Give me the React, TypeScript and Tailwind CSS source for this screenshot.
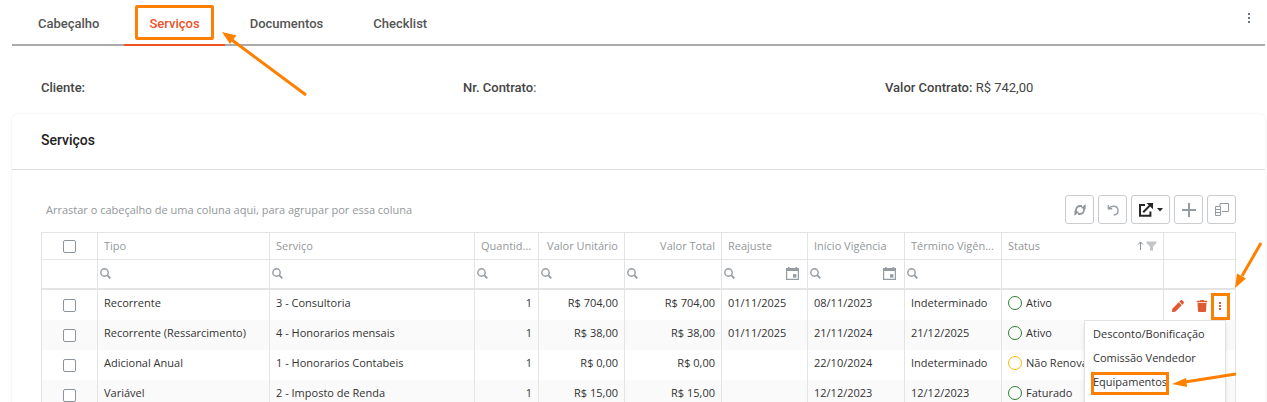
import { useState } from 'react';
import clsx from 'clsx';
import { FaPen, FaTrash } from 'react-icons/fa';

type Status = 'green' | 'yellow';

interface ServiceRow {
  tipo: string;
  servico: string;
  quantidade: number;
  unitario: string;
  total: string;
  reajuste: string;
  inicio: string;
  termino: string;
  status: string;
  color: Status;
}

const TABS = ['Cabeçalho', 'Serviços', 'Documentos', 'Checklist'];

const COLUMNS = [
  { label: 'Tipo', width: 'w-[172px]', search: true },
  { label: 'Serviço', width: '', search: true },
  { label: 'Quantidade', short: 'Quantid...', width: 'w-16', search: true },
  { label: 'Valor Unitário', width: 'w-[86px]', search: true, right: true },
  { label: 'Valor Total', width: 'w-[97px]', search: true, right: true },
  { label: 'Reajuste', width: 'w-[86px]', search: true, date: true },
  { label: 'Início Vigência', width: 'w-[97px]', search: true, date: true },
  { label: 'Término Vigência', short: 'Término Vigên...', width: 'w-[97px]', search: true },
  { label: 'Status', width: 'w-[162px]', sorted: true },
];

const ROWS: ServiceRow[] = [
  { tipo: 'Recorrente', servico: '3 - Consultoria', quantidade: 1, unitario: 'R$ 704,00', total: 'R$ 704,00', reajuste: '01/11/2025', inicio: '08/11/2023', termino: 'Indeterminado', status: 'Ativo', color: 'green' },
  { tipo: 'Recorrente (Ressarcimento)', servico: '4 - Honorarios mensais', quantidade: 1, unitario: 'R$ 38,00', total: 'R$ 38,00', reajuste: '01/11/2025', inicio: '21/11/2024', termino: '21/12/2025', status: 'Ativo', color: 'green' },
  { tipo: 'Adicional Anual', servico: '1 - Honorarios Contabeis', quantidade: 1, unitario: 'R$ 0,00', total: 'R$ 0,00', reajuste: '', inicio: '22/10/2024', termino: 'Indeterminado', status: 'Não Renovado', color: 'yellow' },
  { tipo: 'Variável', servico: '2 - Imposto de Renda', quantidade: 1, unitario: 'R$ 15,00', total: 'R$ 15,00', reajuste: '', inicio: '12/12/2023', termino: '12/12/2023', status: 'Faturado', color: 'green' },
];

const MENU = ['Desconto/Bonificação', 'Comissão Vendedor', 'Equipamentos'];

const CELL = 'border-l border-[#e4e4e4] px-[6px] pt-[5px] align-top whitespace-nowrap';

function SearchIcon() {
  return (
    <svg width="11" height="11" viewBox="0 0 11 11" fill="none" stroke="#959ba3" aria-hidden="true">
      <circle cx="4.5" cy="4.5" r="3.7" strokeWidth="1.4" />
      <path d="M7.2 7.2 10.3 10.3" strokeWidth="1.8" />
    </svg>
  );
}

function CalendarIcon() {
  return (
    <svg width="13" height="13" viewBox="0 0 13 13" fill="#959ba3" aria-hidden="true">
      <path d="M0 1h2V0h1.5v1h6V0H11v1h2v12H0zM1.2 4v7.8h10.6V4z" fillRule="evenodd" />
      <path d="M7 7.2h3.4v3.4H7z" />
    </svg>
  );
}

function RefreshIcon() {
  return (
    <svg width="12" height="12" viewBox="0 0 12 12" fill="none" stroke="#8e959c" strokeWidth="1.8" aria-hidden="true">
      <path d="M2 8V6.2C2 3.8 3.8 2 6.2 2H8M10 4v1.800C10 8.2 8.2 10 5.800 10H4" />
      <path d="M11.6.2v5L6.800 4zM.4 11.800v-5L5.200 8z" fill="#8e959c" stroke="none" />
    </svg>
  );
}

function UndoIcon() {
  return (
    <svg width="12" height="12" viewBox="0 0 12 12" fill="none" stroke="#959ba3" strokeWidth="1.4" aria-hidden="true">
      <path d="M1.4 1v3.8h3.8M1.6 4.6C3 2.8 5.2 1.9 7.4 2.3c2 .4 3.6 2 3.6 4.2 0 2.4-1.9 4.3-4.3 4.5" />
    </svg>
  );
}

function ExportIcon() {
  return (
    <svg width="15" height="14" viewBox="0 0 15 14" fill="none" stroke="#262626" strokeWidth="2" aria-hidden="true">
      <path d="M7 2H2v10.8h10.4V8.4" />
      <path d="M5.2 9.2 12 2.4" />
      <path d="M8.6 0H15v6.2z" fill="#262626" stroke="none" />
    </svg>
  );
}

function ColumnsIcon() {
  return (
    <svg width="14" height="13" viewBox="0 0 14 13" fill="none" stroke="#959ba3" aria-hidden="true">
      <path d="M5 3.5V.5h8.5v8H7M.5 3.5h5v9h-5zM.5 6.5h5M.5 9.5h5" />
    </svg>
  );
}

function DotsIcon({ gap }: { gap: number }) {
  const height = gap * 2 + 2;
  return (
    <svg width="2" height={height} viewBox={`0 0 2 ${height}`} fill="currentColor" aria-hidden="true">
      {[0, 1, 2].map((n) => (
        <rect key={n} y={n * gap} width="2" height="2" />
      ))}
    </svg>
  );
}

function ToolButton({ label, wide, children }: { label: string; wide?: boolean; children: React.ReactNode }) {
  return (
    <button
      type="button"
      aria-label={label}
      className={clsx(
        'flex h-[29px] items-center justify-center gap-1 rounded-[3px] border border-[#c9cccf] bg-white',
        wide ? 'w-[39px]' : 'w-[29px]',
      )}
    >
      {children}
    </button>
  );
}

function Checkbox({ label }: { label: string }) {
  return (
    <input
      type="checkbox"
      aria-label={label}
      className="block size-[13px] appearance-none rounded-[2px] border border-[#8c949c] bg-white checked:bg-[#e8532b]"
    />
  );
}

function RowMenu() {
  return (
    <ul role="menu" className="absolute top-[30px] right-[9px] z-10 h-[110px] w-[142px] border border-[#e2e2e2] bg-white pt-px shadow-md">
      {MENU.map((item) => (
        <li key={item} role="none" className="relative h-6">
          <button type="button" role="menuitem" className="block h-full w-full px-2 text-left">
            {item}
          </button>
          {item === 'Equipamentos' && (
            <>
              <span className="pointer-events-none absolute top-[2px] left-[6px] h-[23px] w-[78px] border-3 border-[#ff8000]" />
              <svg className="pointer-events-none absolute top-[2px] left-[86px]" width="68" height="20" viewBox="0 0 68 20" fill="#ff8000" stroke="#ff8000">
                <path d="M14 10 65 2" strokeWidth="3" />
                <path d="M1 12 15 6l1 9z" stroke="none" />
              </svg>
            </>
          )}
        </li>
      ))}
    </ul>
  );
}

function ServicesTable() {
  return (
    <table className="w-full table-fixed border-separate border-spacing-0 border-t border-r border-[#e4e4e4]">
      <colgroup>
        <col className="w-14" />
        {COLUMNS.map((c) => (
          <col key={c.label} className={c.width} />
        ))}
        <col className="w-[72px]" />
      </colgroup>
      <thead className="text-[#93979b]">
        <tr className="h-[27px]">
          <th className="border-b border-l border-[#e4e4e4] p-0">
            <div className="flex justify-center">
              <Checkbox label="Selecionar todos" />
            </div>
          </th>
          {COLUMNS.map((c) => (
            <th
              key={c.label}
              title={c.label}
              className={clsx(
                'border-b border-l border-[#e4e4e4] px-[6px] py-0 font-normal whitespace-nowrap',
                c.right ? 'text-right' : 'text-left',
              )}
            >
              {c.sorted ? (
                <span className="flex items-center">
                  {c.label}
                  <svg className="ml-auto" width="20" height="10" viewBox="0 0 20 10" aria-hidden="true">
                    <path d="M3.5 9V1M1 3.5 3.5 1 6 3.5" fill="none" stroke="#8b9096" />
                    <path d="M9.5 0.5H19.5V2L16 5.5V9.5H13V5.5L9.5 2z" fill="#c3c6c9" />
                  </svg>
                </span>
              ) : (
                c.short ?? c.label
              )}
            </th>
          ))}
          <th aria-label="Ações" className="border-b border-l border-[#e4e4e4] p-0" />
        </tr>
        <tr className="h-[30px]">
          <td className="border-b-2 border-l border-[#e4e4e4] p-0" />
          {COLUMNS.map((c) => (
            <td key={c.label} className="border-b-2 border-l border-[#e4e4e4] p-0">
              {c.search && (
                <div className="flex items-center pr-2 pb-[2px] pl-[2px]">
                  <SearchIcon />
                  <input type="text" aria-label={`Filtrar ${c.label}`} className="h-6 w-0 min-w-0 flex-1 bg-transparent px-1 outline-none" />
                  {c.date && (
                    <button type="button" aria-label={`Escolher data de ${c.label}`}>
                      <CalendarIcon />
                    </button>
                  )}
                </div>
              )}
            </td>
          ))}
          <td className="border-b-2 border-l border-[#e4e4e4] p-0" />
        </tr>
      </thead>
      <tbody>
        {ROWS.map((row, i) => (
          <tr key={row.servico} className="h-[30px] even:bg-[#fafafa]">
            <td className="border-l border-[#e4e4e4] p-0">
              <div className="flex justify-center">
                <Checkbox label={`Selecionar ${row.servico}`} />
              </div>
            </td>
            <td className={CELL}>{row.tipo}</td>
            <td className={CELL}>{row.servico}</td>
            <td className={clsx(CELL, 'text-right')}>{row.quantidade}</td>
            <td className={clsx(CELL, 'text-right')}>{row.unitario}</td>
            <td className={clsx(CELL, 'text-right')}>{row.total}</td>
            <td className={CELL}>{row.reajuste}</td>
            <td className={CELL}>{row.inicio}</td>
            <td className={CELL}>{row.termino}</td>
            <td className={CELL}>
              <span className="flex items-center gap-1">
                <span className={clsx('size-[14px] rounded-full border', row.color === 'green' ? 'border-[#2e7d32]' : 'border-[#fbbc04]')} />
                {row.status}
              </span>
            </td>
            <td className="relative border-l border-[#e4e4e4] p-0">
              {i === 0 && (
                <>
                  <div className="flex h-[30px] items-center pt-[2px] pl-2 text-[#df5a32]">
                    <button type="button" aria-label="Editar" className="w-6">
                      <FaPen size={12} />
                    </button>
                    <button type="button" aria-label="Excluir" className="w-4">
                      <FaTrash size={12} />
                    </button>
                    <button type="button" aria-label="Mais opções" aria-haspopup="menu" className="flex h-5 w-[15px] items-center justify-center">
                      <DotsIcon gap={3} />
                    </button>
                  </div>
                  <span className="pointer-events-none absolute top-[3px] right-[5px] z-20 h-[27px] w-[19px] border-3 border-[#ff8000]" />
                  <svg className="pointer-events-none absolute -top-[51px] -right-[31px]" width="32" height="52" viewBox="0 0 32 52" fill="#ff8000" stroke="#ff8000">
                    <path d="M8 37 27 4" strokeWidth="3" />
                    <path d="M1 49 3 34.500 12 39.500z" stroke="none" />
                  </svg>
                  <RowMenu />
                </>
              )}
            </td>
          </tr>
        ))}
      </tbody>
    </table>
  );
}

export default function App() {
  const [active, setActive] = useState('Serviços');

  return (
    <div className="h-screen overflow-hidden bg-white pr-[2px] pl-3 font-['Roboto',sans-serif] text-[13px] text-[#444]">
      <nav className="flex h-[46px] items-stretch border-b-2 border-[#aaaaaa] pl-px">
        {TABS.map((tab) => (
          <button
            key={tab}
            type="button"
            onClick={() => setActive(tab)}
            className={clsx(
              'relative -mb-[2px] border-b-2 px-[25px] pt-1 font-medium',
              tab === active ? 'border-[#f0531f] text-[#e8532b]' : 'border-transparent text-[#555]',
            )}
          >
            {tab}
            {tab === 'Serviços' && (
              <>
                <span className="pointer-events-none absolute top-[5px] right-[11px] left-[11px] h-[35px] rounded-[2px] border-3 border-[#ff8000]" />
                <svg className="pointer-events-none absolute top-[30px] left-[97px] z-10" width="88" height="68" viewBox="0 0 88 68" fill="#ff8000" stroke="#ff8000">
                  <path d="M11 10 85 65" strokeWidth="3" />
                  <path d="M1 2 15.500 5.500 9 14z" stroke="none" />
                </svg>
              </>
            )}
          </button>
        ))}
        <button type="button" aria-label="Mais opções" className="mr-2 mb-2 ml-auto flex w-4 items-center justify-center text-[#6a7290]">
          <DotsIcon gap={4} />
        </button>
      </nav>

      <div className="grid h-[68px] grid-cols-3 gap-[42px] pt-8 pl-[29px]">
        <p><b className="font-medium">Cliente:</b></p>
        <p><b className="font-medium">Nr. Contrato</b>:</p>
        <p><b className="font-medium">Valor Contrato:</b> R$ 742,00</p>
      </div>

      <section className="rounded-md shadow-[0_0_3px_rgba(0,0,0,0.08)]">
        <h2 className="flex h-14 items-center border-b border-[#dcdcdc] pb-1 pl-[29px] text-sm font-medium text-[#222]">Serviços</h2>
        <div className="px-[29px] pt-[25px] font-['Open_Sans',sans-serif] text-[11px] leading-4 text-[#333]">
          <div className="mb-2 flex items-center gap-1">
            <p className="mr-auto pl-[5px] text-[#93979b]">Arrastar o cabeçalho de uma coluna aqui, para agrupar por essa coluna</p>
            <ToolButton label="Atualizar"><RefreshIcon /></ToolButton>
            <ToolButton label="Desfazer"><UndoIcon /></ToolButton>
            <ToolButton label="Exportar" wide>
              <ExportIcon />
              <svg width="6" height="4" viewBox="0 0 6 4" fill="#262626" aria-hidden="true"><path d="M0 0h6L3 3.500z" /></svg>
            </ToolButton>
            <ToolButton label="Adicionar">
              <svg width="14" height="14" viewBox="0 0 14 14" stroke="#959ba3" strokeWidth="2" aria-hidden="true"><path d="M7 0v14M0 7h14" /></svg>
            </ToolButton>
            <ToolButton label="Colunas"><ColumnsIcon /></ToolButton>
          </div>
          <ServicesTable />
        </div>
      </section>
    </div>
  );
}
